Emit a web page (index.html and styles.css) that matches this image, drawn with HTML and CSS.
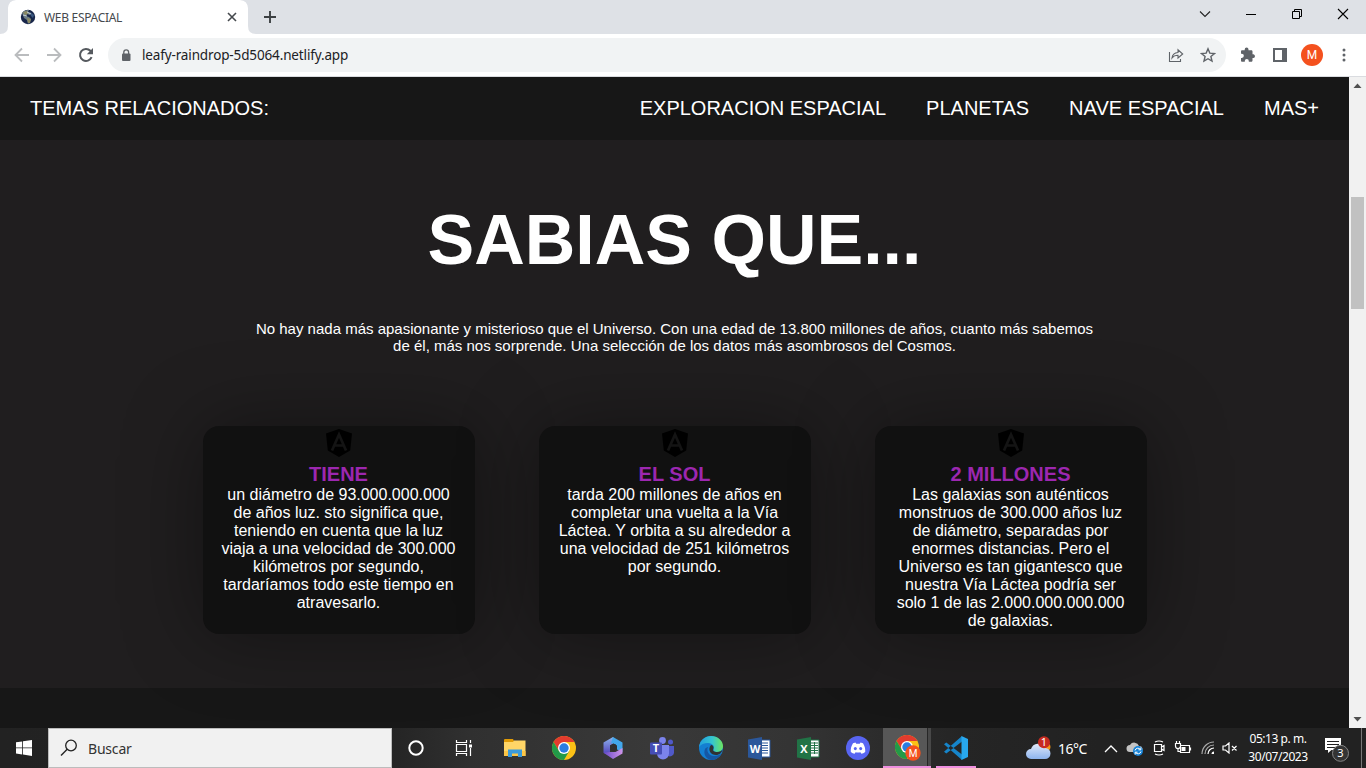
FILE: index.html
```html
<!DOCTYPE html>
<html lang="es">
<head>
<meta charset="utf-8">
<title>WEB ESPACIAL</title>
<link rel="stylesheet" href="styles.css">
</head>
<body>
<header class="tabstrip">
  <div class="tab">
    <svg class="favicon" width="16" height="16" viewBox="0 0 16 16"><circle cx="8" cy="8" r="7.2" fill="#18264a"/><path d="M2 4c2-3 5-3 7-3l-1 2 3 1-1 2-3-1-1 2 3 1 2 2-1 3-2 2-1-4-3-2z" fill="#6c7c83"/><path d="M3 3l4-1 1 3-3 1zM7 9l4 1-1 4-2 0z" fill="#8b8a63"/><path d="M10 3l4 3-1 3-2-2z" fill="#38577f"/><path d="M3 6l4 1M7 3l4 2" stroke="#dbe5e8" stroke-width=".8"/></svg>
    <span class="tab-title">WEB ESPACIAL</span>
    <svg class="tab-close" width="10" height="10" viewBox="0 0 10 10"><path d="M1 1l8 8M9 1l-8 8" stroke="#45494d" stroke-width="1.6"/></svg>
  </div>
  <svg class="new-tab" width="14" height="14" viewBox="0 0 14 14"><path d="M7 1v12M1 7h12" stroke="#3c4043" stroke-width="1.9"/></svg>
  <div class="window-buttons">
    <svg width="46" height="28" viewBox="0 0 46 28"><path d="M18 11.500l5 5 5-5" fill="none" stroke="#222" stroke-width="1.1"/></svg>
    <svg width="46" height="28" viewBox="0 0 46 28"><path d="M18 14.500h10" stroke="#000"/></svg>
    <svg width="46" height="28" viewBox="0 0 46 28"><path d="M18.500 11.500h7v7h-7zM20.500 11.500v-2h7v7h-2" fill="none" stroke="#000"/></svg>
    <svg width="46" height="28" viewBox="0 0 46 28"><path d="M18 9l10 10M28 9L18 19" stroke="#000" stroke-width="1.1"/></svg>
  </div>
</header>
<div class="toolbar">
  <svg class="nav-icon" width="16" height="16" viewBox="0 0 16 16"><path d="M15 8H2M8 1.500L1.500 8 8 14.500" fill="none" stroke="#babcbe" stroke-width="1.800"/></svg>
  <svg class="nav-icon" width="16" height="16" viewBox="0 0 16 16"><path d="M1 8h13M8 1.500L14.500 8 8 14.500" fill="none" stroke="#babcbe" stroke-width="1.800"/></svg>
  <svg class="nav-icon" width="16" height="16" viewBox="0 0 16 16"><path d="M13.600 10.200A6 6 0 1 1 12.400 3.800L14 5.500" fill="none" stroke="#55595e" stroke-width="2"/><path d="M15 1v6.200H8.800z" fill="#55595e"/></svg>
  <div class="address">
    <svg width="10" height="13" viewBox="0 0 10 13"><rect x="1" y="4.500" width="8.500" height="7.500" rx="1" fill="#5f6368"/><path d="M2.800 5V3.300a2.400 2.400 0 0 1 4.800 0V5" fill="none" stroke="#5f6368" stroke-width="1.300"/></svg>
    <span class="url">leafy-raindrop-5d5064.netlify.app</span>
    <svg class="share" width="16" height="16" viewBox="0 0 16 16"><path d="M1.500 5v9.500h11V12M4 11c.4-3.500 2.500-5.300 6-5.500V2.800L14.700 7 10 11V8.300C7.300 8.300 5.500 9 4 11z" fill="none" stroke="#5f6368" stroke-width="1.100"/></svg>
    <svg width="16" height="16" viewBox="0 0 16 16"><path d="M8 1.800l1.800 4.300 4.700.4-3.600 3 1.100 4.600L8 11.700l-4 2.400 1.100-4.600-3.600-3 4.700-.4z" fill="none" stroke="#5f6368" stroke-width="1.400"/></svg>
  </div>
  <svg class="ext" width="16" height="16" viewBox="0 0 16 16"><path d="M13.500 7.300h-1V4.500c0-.8-.6-1.300-1.300-1.300H8.500v-.8a1.900 1.900 0 0 0-3.800 0v.8H2.200C1.500 3.200 1 3.700 1 4.500v2.300h.8a2 2 0 0 1 0 4.100H1v2.600c0 .7.500 1.300 1.200 1.300h2.600V14a2 2 0 0 1 4 0v.8h2.400c.7 0 1.300-.6 1.300-1.300V11h1a1.900 1.900 0 0 0 0-3.700z" fill="#5f6368"/></svg>
  <svg class="panel" width="14" height="14" viewBox="0 0 14 14"><path d="M1 1h12v12H1z" fill="#fff" stroke="#5f6368" stroke-width="2"/><path d="M9 1h4v12H9z" fill="#5f6368"/></svg>
  <span class="avatar">M</span>
  <svg width="4" height="14" viewBox="0 0 4 14"><g fill="#5f6368"><circle cx="2" cy="2" r="1.500"/><circle cx="2" cy="7" r="1.500"/><circle cx="2" cy="12" r="1.500"/></g></svg>
</div>
<div class="viewport">
  <main class="page">
    <nav class="topics">
      <span class="topics-label">TEMAS RELACIONADOS:</span>
      <a>EXPLORACION ESPACIAL</a><a>PLANETAS</a><a>NAVE ESPACIAL</a><a>MAS+</a>
    </nav>
    <section class="facts">
      <h1>SABIAS QUE...</h1>
      <p class="intro">No hay nada más apasionante y misterioso que el Universo. Con una edad de 13.800 millones de años, cuanto más sabemos<br>de él, más nos sorprende. Una selección de los datos más asombrosos del Cosmos.</p>
      <div class="cards">
        <article class="card">
          <svg class="shield" width="26" height="28" viewBox="0 0 26 28"><path d="M13 0l13 4.500-1.800 17L13 28 1.800 21.500 0 4.500z" fill="#000"/><path d="M6 21.500L13 5.500l7 16M8.800 16.500h8.400" fill="none" stroke="#141414" stroke-width="2.700"/></svg>
          <h2>TIENE</h2>
          <p>un diámetro de 93.000.000.000<br>de años luz. sto significa que,<br>teniendo en cuenta que la luz<br>viaja a una velocidad de 300.000<br>kilómetros por segundo,<br>tardaríamos todo este tiempo en<br>atravesarlo.</p>
        </article>
        <article class="card">
          <svg class="shield" width="26" height="28" viewBox="0 0 26 28"><path d="M13 0l13 4.500-1.800 17L13 28 1.800 21.500 0 4.500z" fill="#000"/><path d="M6 21.500L13 5.500l7 16M8.800 16.500h8.400" fill="none" stroke="#141414" stroke-width="2.700"/></svg>
          <h2>EL SOL</h2>
          <p>tarda 200 millones de años en<br>completar una vuelta a la Vía<br>Láctea. Y orbita a su alrededor a<br>una velocidad de 251 kilómetros<br>por segundo.</p>
        </article>
        <article class="card">
          <svg class="shield" width="26" height="28" viewBox="0 0 26 28"><path d="M13 0l13 4.500-1.800 17L13 28 1.800 21.500 0 4.500z" fill="#000"/><path d="M6 21.500L13 5.500l7 16M8.800 16.500h8.400" fill="none" stroke="#141414" stroke-width="2.700"/></svg>
          <h2>2 MILLONES</h2>
          <p>Las galaxias son auténticos<br>monstruos de 300.000 años luz<br>de diámetro, separadas por<br>enormes distancias. Pero el<br>Universo es tan gigantesco que<br>nuestra Vía Láctea podría ser<br>solo 1 de las 2.000.000.000.000<br>de galaxias.</p>
        </article>
      </div>
    </section>
    <div class="next-section"></div>
  </main>
  <div class="scrollbar">
    <svg width="17" height="17" viewBox="0 0 17 17"><path d="M4.500 11l4-4.500 4 4.500z" fill="#505050"/></svg>
    <div class="thumb"></div>
    <svg width="17" height="17" viewBox="0 0 17 17"><path d="M4.500 6l4 4.500 4-4.500z" fill="#505050"/></svg>
  </div>
</div>
<footer class="taskbar">
  <div class="slot"><svg width="16" height="16" viewBox="0 0 16 16"><path d="M0 2.300L6.200 1.400V7.500H0zM7 1.300L16 0v7.500H7zM0 8.300h6.200v6.100L0 13.600zM7 8.300h9V16L7 14.600z" fill="#fff"/></svg></div>
  <div class="search"><svg width="18" height="18" viewBox="0 0 18 18"><circle cx="11" cy="6.500" r="5.300" fill="none" stroke="#222" stroke-width="1.300"/><path d="M7.200 10.300L1 16.500" stroke="#222" stroke-width="1.400"/></svg><span>Buscar</span></div>
  <div class="slot"><svg width="16" height="16" viewBox="0 0 16 16"><circle cx="8" cy="8" r="6.700" fill="none" stroke="#fff" stroke-width="2"/></svg></div>
  <div class="slot task-view"><svg width="18" height="16" viewBox="0 0 18 16"><path d="M1.500 0v2.500h10V0M1.500 16v-2.500h10V16M1.500 4.500h10v7h-10zM15.500 0v3M15.500 8v8" fill="none" stroke="#fff" stroke-width="1.200"/><path d="M14 4.500h3v3h-3z" fill="#fff"/></svg></div>
  <div class="slot app"><svg width="22" height="20" viewBox="0 0 22 20"><path d="M0 1.500Q0 1 1 1h8l1 2v4H0z" fill="#e19b06"/><path d="M0 4h9l1-1.500h11.500V18H0z" fill="#ffd667"/><path d="M0 13h21.500v5H0z" fill="#fbc546"/><path d="M4 11.500h14V19h-4v-3.500H8V19H4z" fill="#3b9ad9"/></svg></div>
  <div class="slot app"><svg width="24" height="24" viewBox="0 0 24 24"><circle cx="12" cy="12" r="12" fill="#fbc116"/><path d="M1.600 6A12 12 0 0 1 22.400 6H12L7 15z" fill="#e23b2e"/><path d="M1.600 6A12 12 0 0 0 12 24l5.200-9-5.200-3-5 3z" fill="#229a48"/><circle cx="12" cy="12" r="6" fill="#fff"/><circle cx="12" cy="12" r="4.700" fill="#2a7de1"/></svg></div>
  <div class="slot app"><svg width="22" height="22" viewBox="0 0 22 22"><defs><linearGradient id="m1" x1="0" y1="0" x2="0" y2="1"><stop stop-color="#8fb5ee"/><stop offset="1" stop-color="#4f3db8"/></linearGradient><linearGradient id="m2"><stop stop-color="#684ac8"/><stop offset="1" stop-color="#d093e8"/></linearGradient></defs><path d="M11 0L1.500 5.500v10.200L6 18l2-2V8.500L14 5z" fill="url(#m1)"/><path d="M11 0l9.500 5.500v9.500L14 12V7.500L9 6z" fill="#42a7ec"/><path d="M1.500 15.700L11 22l9.500-5.500V11l-7 4L8 15z" fill="url(#m2)"/><path d="M8 8.500l3.500-2L15 8.500v4.300l-3.500 2-3.500-2z" fill="#303031"/></svg></div>
  <div class="slot app"><svg width="24" height="23" viewBox="0 0 24 23"><circle cx="12.500" cy="3.500" r="3.400" fill="#7b83eb"/><circle cx="20.500" cy="5" r="2.500" fill="#5059c9"/><path d="M16 9h8v6a4 4 0 0 1-7 3z" fill="#5059c9"/><path d="M7 8h12v8.500a6 6 0 0 1-12 0z" fill="#7b83eb"/><rect x="0" y="5.500" width="12" height="12" rx="1" fill="#464db5"/><text class="app-letter" x="6" y="15">T</text></svg></div>
  <div class="slot app"><svg width="24" height="24" viewBox="0 0 24 24"><defs><linearGradient id="e1"><stop stop-color="#229fde"/><stop offset=".55" stop-color="#35c5cf"/><stop offset="1" stop-color="#6de55e"/></linearGradient></defs><circle cx="12" cy="12" r="12" fill="#147fd2"/><path d="M0 11C1 4 6 0 12 0c7 0 12 5 12 10 0 4-3 6-6 6s-4-1-3.500-2.500C16 11 14 7 9 7 5 7 2 8.500 0 11z" fill="url(#e1)"/><path d="M9 11c-2 4 1 9 6 9 3 0 5-1 7-2-2 4-6 6-10 6C7 23 4 18 6 13c.6-1 2-2 3-2z" fill="#1557a4"/><path d="M12 9c2 0 3 2 2.300 4-.8 2 1 3 3.700 3 3 0 4.500-1 5.500-2.500-.5 3-3 5.500-6.500 5.500-5 0-9-5-5-10z" fill="#303233"/></svg></div>
  <div class="slot app"><svg width="23" height="23" viewBox="0 0 23 23"><path d="M12 3h10v17H12z" fill="#fff" stroke="#2b579a"/><path d="M13 6h7M13 8.500h7M13 11h7M13 13.500h7M13 16h7" stroke="#2b579a"/><path d="M0 2.500L14 0v23L0 20.500z" fill="#2b579a"/><text class="app-letter" x="7" y="16">W</text></svg></div>
  <div class="slot app"><svg width="23" height="23" viewBox="0 0 23 23"><path d="M12 3h10v17H12z" fill="#fff" stroke="#217346"/><path d="M14 6h7M14 8.500h7M14 11h7M14 13.500h7M14 16h7M17.500 5v12" stroke="#217346"/><path d="M0 2.500L14 0v23L0 20.500z" fill="#217346"/><text class="app-letter" x="7" y="16">X</text></svg></div>
  <div class="slot app"><svg width="24" height="24" viewBox="0 0 24 24"><circle cx="12" cy="12" r="12" fill="#5865f2"/><path d="M9.500 6.500L7 7.200C5.200 10 4.500 13 4.800 16c1.300 1 2.500 1.500 3.800 1.700l1-1.500c1.600.4 3.200.4 4.800 0l1 1.500c1.300-.2 2.500-.7 3.800-1.700.3-3-.4-6-2.200-8.800l-2.500-.7-.7 1.200h-3.600z" fill="#fff"/><ellipse cx="9.300" cy="12.600" rx="1.500" ry="1.700" fill="#5865f2"/><ellipse cx="14.700" cy="12.600" rx="1.500" ry="1.700" fill="#5865f2"/></svg></div>
  <div class="slot app chrome-active"><svg width="26" height="26" viewBox="0 0 26 26"><circle cx="12" cy="12" r="12" fill="#fbc116"/><path d="M1.600 6A12 12 0 0 1 22.400 6H12L7 15z" fill="#e23b2e"/><path d="M1.600 6A12 12 0 0 0 12 24l5.200-9-5.200-3-5 3z" fill="#229a48"/><circle cx="12" cy="12" r="6" fill="#fff"/><circle cx="12" cy="12" r="4.700" fill="#2a7de1"/><circle cx="18" cy="18" r="7.700" fill="#f4511e"/><text class="badge-letter" x="18" y="21.500">M</text></svg></div>
  <div class="slot app code-running"><svg width="24" height="24" viewBox="0 0 24 24"><path d="M0 8.300L2.300 6.500 18 18.500V24zM0 15.700l2.300 1.800L18 5.500V0z" fill="#1685ca"/><path d="M17.500 0L24 3v18l-6.500 3z" fill="#28a8ee"/></svg></div>
  <div class="tray">
    <svg class="weather" width="26" height="24" viewBox="0 0 26 24"><defs><linearGradient id="cloud" x1="0" y1="0" x2="0" y2="1"><stop stop-color="#e1eafa"/><stop offset="1" stop-color="#8db4ee"/></linearGradient></defs><circle cx="20" cy="11" r="4.500" fill="#f39718"/><path d="M5 23a5 5 0 0 1 0-10 7.500 7.500 0 0 1 14-1 5.500 5.500 0 0 1 0 11z" fill="url(#cloud)"/><circle cx="18" cy="6.300" r="6" fill="#c82b20"/><text class="count" x="18" y="10">1</text></svg>
    <span class="temp">16°C</span>
    <svg class="chevron" width="14" height="9" viewBox="0 0 14 9"><path d="M1 8l6-6 6 6" fill="none" stroke="#fff" stroke-width="1.300"/></svg>
    <svg class="cloud-sync" width="18" height="15" viewBox="0 0 18 15"><path d="M4 11a3.500 3.500 0 0 1 0-7 5 5 0 0 1 9 1 3 3 0 0 1 1 6z" fill="#c3c3c3"/><circle cx="12" cy="10" r="5" fill="#1683d8"/><path d="M9 9.500a3 3 0 0 1 5.400-1M15 10.500a3 3 0 0 1-5.400 1M14.800 6.500v2.300h-2.300M9.200 13.500v-2.300h2.300" fill="none" stroke="#fff"/></svg>
    <svg class="meet" width="14" height="16" viewBox="0 0 14 16"><path d="M2.500 4.500h7v7h-7zM9.500 7l2.500-1.500v5L9.500 9M3 2q4-2 8 0M3 14q4 2 8 0" fill="none" stroke="#fff" stroke-width="1.200"/></svg>
    <svg class="battery" width="18" height="14" viewBox="0 0 18 14"><path d="M6.500 4.500h9v7h-9zM16.500 6.500v3M1.500 2.500h5v2.500a2.500 2.500 0 0 1-5 0zM2.500 0v3M5.500 0v3M4 7v3.500h2.500" fill="none" stroke="#fff" stroke-width="1.200"/><path d="M7.500 6h4v4h-4z" fill="#fff"/></svg>
    <svg class="wifi" width="14" height="14" viewBox="0 0 14 14"><g fill="none" stroke="#aaa" stroke-width="1.200"><path d="M1 13A12 12 0 0 1 13 1"/><path d="M4 13A9 9 0 0 1 13 4"/><path d="M7 13A6 6 0 0 1 13 7" stroke="#fff"/></g><path d="M10.500 13q0-2.500 2.500-2.500V13z" fill="#fff"/></svg>
    <svg class="mute" width="16" height="12" viewBox="0 0 16 12"><path d="M1 4h2.500L7 1v10L3.500 8H1zM10 4l4.500 4.500M14.500 4L10 8.500" fill="none" stroke="#fff" stroke-width="1.200"/></svg>
    <div class="clock"><span class="time">05:13 p. m.</span><span class="date">30/07/2023</span></div>
    <svg class="notes" width="26" height="26" viewBox="0 0 26 26"><path d="M1 2h16v12H7.500L4 17v-3H1z" fill="#fff"/><path d="M3 5.500h12M3 8.500h12M3 11.500h8" stroke="#222"/><circle cx="16.500" cy="17.300" r="8" fill="#343434" stroke="#858585"/><text class="count" x="16.500" y="21.300">3</text></svg>
    <span class="desktop-edge"></span>
  </div>
</footer>
</body>
</html>
```

FILE: styles.css
```css
* { box-sizing: border-box; margin: 0; padding: 0; }
body { width: 1366px; height: 768px; overflow: hidden; display: flex; flex-direction: column; font-family: "Liberation Sans", Arial, sans-serif; background: #171717; }
svg { display: block; flex: none; }

/* browser window */
.tabstrip { height: 34px; flex: none; background: #dee1e6; display: flex; align-items: center; padding-left: 8px; font-family: "Noto Sans", sans-serif; }
.tab { width: 240px; height: 34px; background: #fff; border-radius: 8px 8px 0 0; display: flex; align-items: center; padding-left: 12px; box-shadow: -8px 8px 0 0 #fff, 8px 8px 0 0 #fff; clip-path: path("M-8 34Q0 34 0 26V8Q0 0 8 0H232Q240 0 240 8V26Q240 34 248 34Z"); }
.tab-title { font-size: 12px; color: #45494d; margin-left: 8px; width: 184px; letter-spacing: -.3px; white-space: nowrap; }
.tab-close { margin-left: -1px; }
.new-tab { margin-left: 15px; }
.window-buttons { display: flex; margin-left: auto; align-self: flex-start; }
.toolbar { height: 43px; flex: none; background: #fff; border-bottom: 1px solid #dadce0; display: flex; align-items: center; padding: 0 20px 0 14px; }
.nav-icon { margin-right: 16px; }
.address { width: 1118px; height: 34px; margin-left: -2px; border-radius: 17px; background: #f1f3f4; display: flex; align-items: center; padding: 0 10px 0 13px; }
.url { font-family: "Noto Sans", sans-serif; font-size: 13.500px; letter-spacing: -.14px; color: #202124; margin-left: 11px; white-space: nowrap; }
.share { margin: 0 16px 0 auto; }
.ext { margin-left: 14px; }
.panel { margin-left: 17px; }
.avatar { width: 22px; height: 22px; border-radius: 50%; background: #f4511e; color: #fff; font: 12px/22px Roboto, sans-serif; text-align: center; margin: 0 auto 0 14px; }

/* page */
.viewport { height: 651px; flex: none; display: flex; }
.page { width: 1349px; overflow: hidden; background: #201e1f; color: #fff; }
.topics { height: 63px; background: #171717; display: flex; align-items: center; gap: 40px; padding: 0 30px 1px; font-size: 20px; white-space: nowrap; }
.topics-label { margin-right: auto; }
.facts { height: 548px; padding-top: 60px; text-align: center; }
h1 { font-size: 70px; line-height: 80px; }
.intro { font-size: 15px; line-height: 17px; margin-top: 40px; margin-bottom: 72px; }
.cards { display: flex; gap: 64px; padding-left: 202.5px; }
.card { width: 272px; height: 208px; border-radius: 16px; background: #111; box-shadow: 0 0 80px rgba(0,0,0,.4); }
.shield { margin: 3px auto 6px; }
.card h2 { font-size: 20px; line-height: 23px; color: #9c27b0; }
.card p { font-size: 16px; line-height: 18px; white-space: nowrap; }
.next-section { height: 40px; background: #171717; }
.scrollbar { width: 17px; background: #f1f1f1; display: flex; flex-direction: column; }
.thumb { width: 13px; height: 112px; background: #c1c1c1; margin: 103px 2px auto; }

/* taskbar */
.taskbar { height: 40px; flex: none; background: linear-gradient(90deg, #222 0, #242424 390px, #303030 470px, #393939 650px, #343434 790px, #252525 960px, #222 1100px); display: flex; align-items: center; font-family: "Noto Sans", sans-serif; color: #fff; }
.slot { width: 48px; height: 40px; flex: none; display: flex; align-items: center; justify-content: center; }
.slot.app { width: 49px; }
.task-view { margin-right: 2px; }
.search { width: 344px; height: 40px; background: #f1f1f1; border: 1px solid #bcbcbc; display: flex; align-items: center; padding-left: 11px; color: #333; font-size: 14px; letter-spacing: -.2px; }
.search span { margin-left: 10px; }
.slot.chrome-active { width: 48px; background: linear-gradient(90deg, #575757 44px, #272727 44px, #272727 45px, #484848 45px); border-bottom: 2px solid #ee8fdf; padding: 2px 0 0 1px; margin-left: 1px; }
.slot.code-running { width: 40px; margin-left: 5px; border-bottom: 2px solid #ee8fdf; padding-top: 2px; }
.app-letter { font: bold 11px "Open Sans", sans-serif; fill: #fff; text-anchor: middle; }
.badge-letter { font: 10px Roboto, sans-serif; fill: #fff; text-anchor: middle; }
.count { font: 11px "Noto Sans", sans-serif; fill: #fff; text-anchor: middle; }
.tray { flex: 1; height: 40px; display: flex; align-items: center; padding-left: 50px; }
.temp { width: 30px; margin: 0 1px 0 6px; font-size: 14px; letter-spacing: -.5px; white-space: nowrap; }
.chevron { margin-left: 15px; }
.cloud-sync { margin-left: 8px; }
.meet { margin-left: 8px; }
.battery { margin-left: 8px; }
.wifi { margin-left: 9px; }
.mute { margin-left: 7px; }
.clock { width: 60px; margin-left: 10px; display: flex; flex-direction: column; align-items: center; font-size: 12px; line-height: 18px; letter-spacing: -.45px; white-space: nowrap; }
.notes { margin: 2px 0 0 16px; }
.desktop-edge { width: 1px; height: 40px; background: #777; margin-left: 11px; }
```
